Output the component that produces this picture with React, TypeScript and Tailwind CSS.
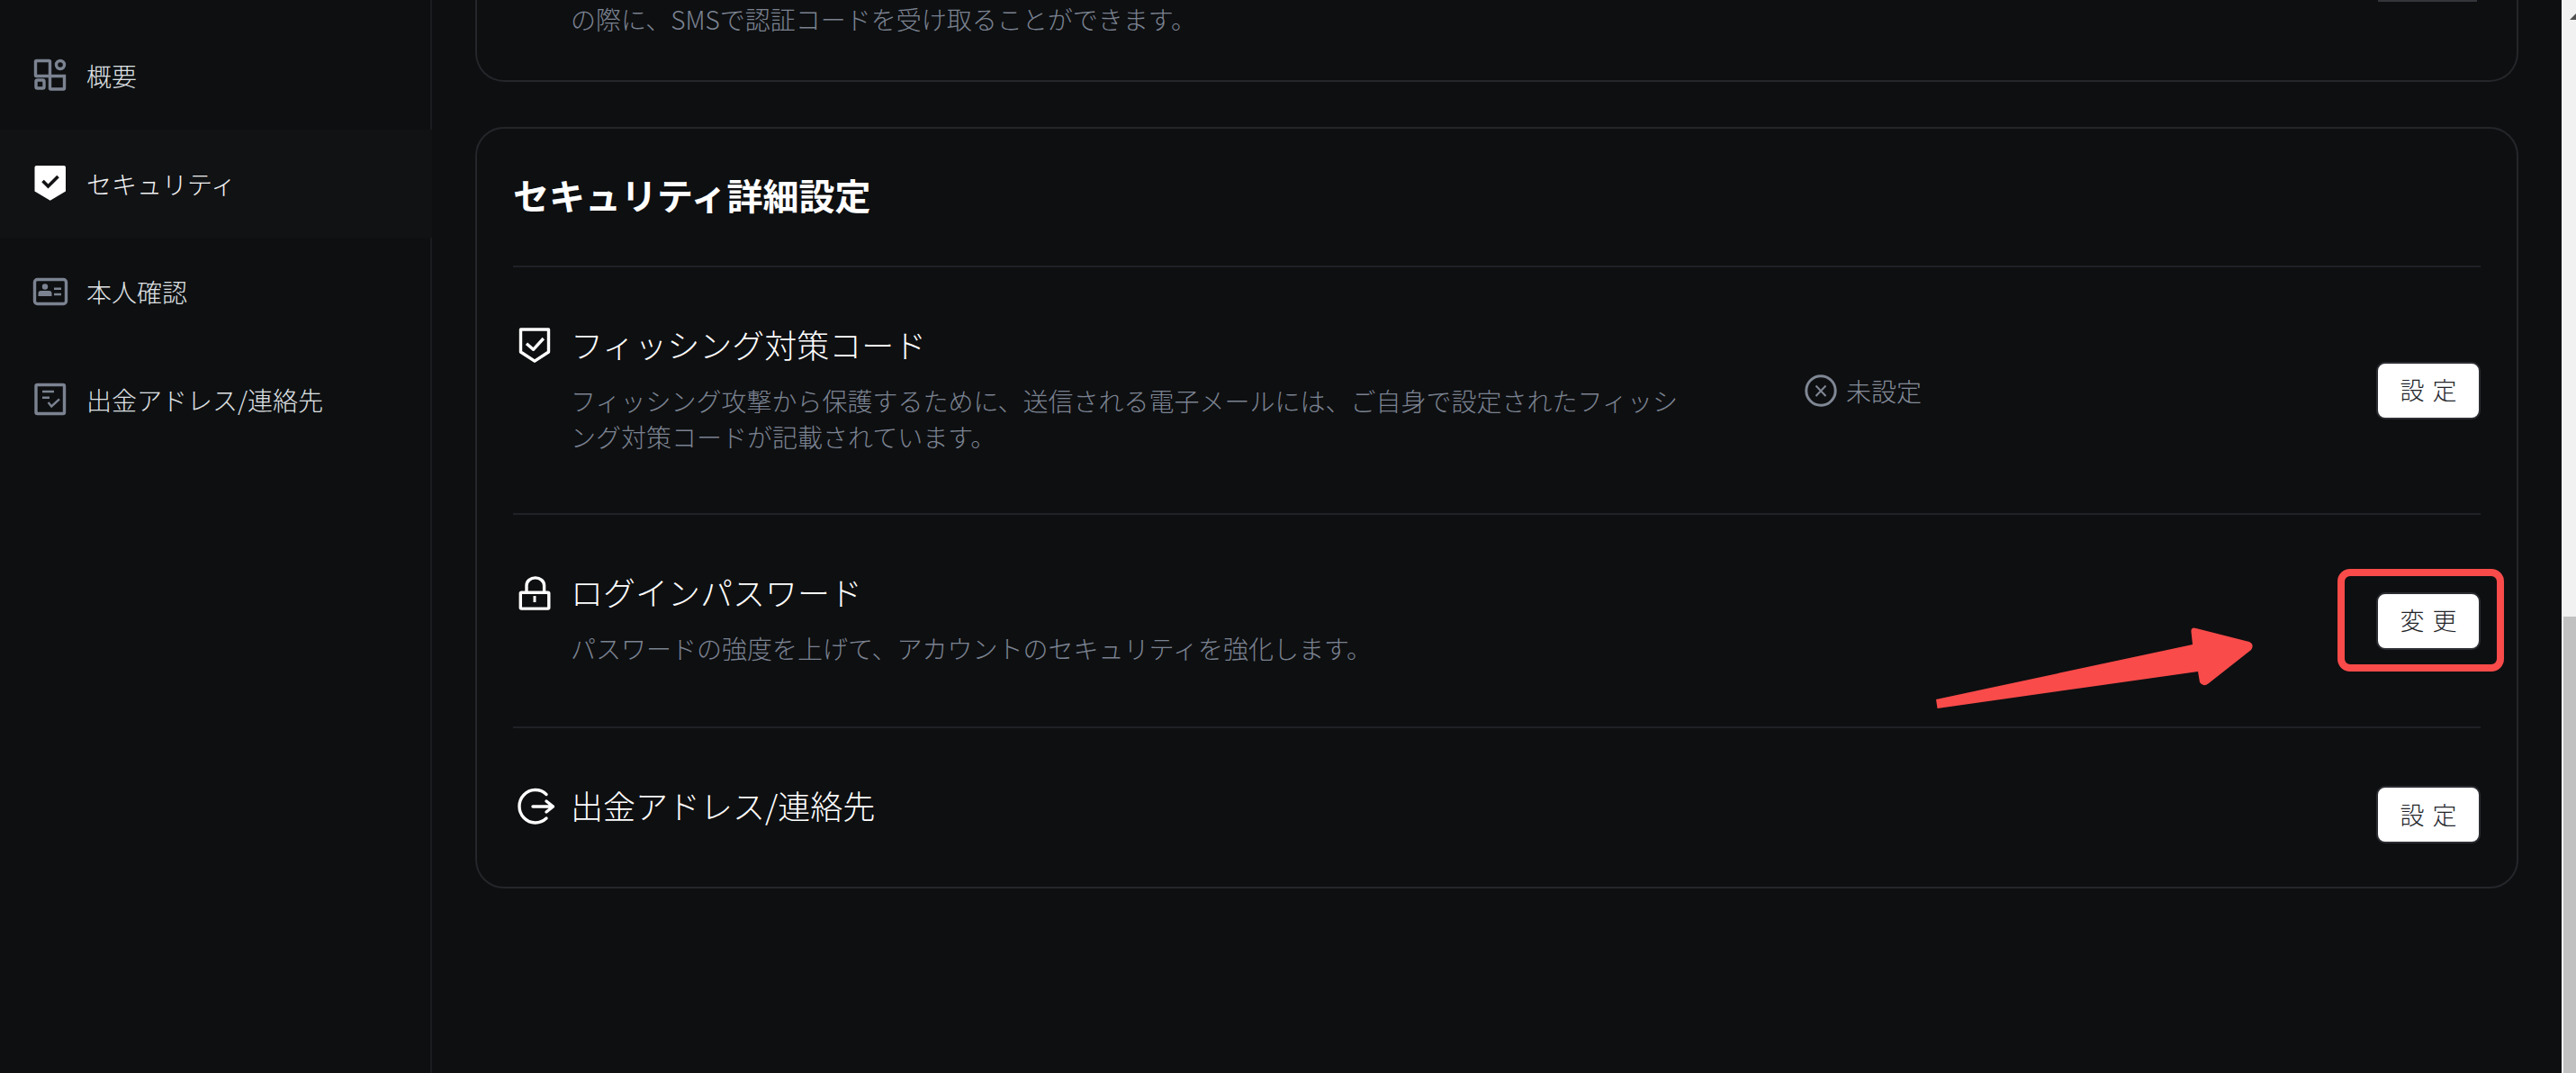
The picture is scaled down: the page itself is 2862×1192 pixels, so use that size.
import React from "react";

const stroke = "#7b8391";

function OverviewIcon() {
  return (
    <svg width="40" height="40" viewBox="0 0 40 40" fill="none" stroke={stroke} strokeWidth="3.4" className="shrink-0">
      <path d="M4.5 3.5H18.5A1 1 0 0 1 19.5 4.5V20.5H4.5A1 1 0 0 1 3.5 19.5V4.5A1 1 0 0 1 4.5 3.5Z" />
      <circle cx="31" cy="8" r="4.5" />
      <rect x="4" y="25" width="9" height="9" rx="1.5" />
      <path d="M19.5 20.5H35.5V34A1 1 0 0 1 34.5 35H20.5A1 1 0 0 1 19.5 34Z" />
    </svg>
  );
}

function ShieldFilledIcon() {
  return (
    <svg width="40" height="40" viewBox="0 0 40 40" fill="none" className="shrink-0">
      <path d="M4.5 0H35A2 2 0 0 1 37 2V28.5L19.75 38.7L2.5 28.5V2A2 2 0 0 1 4.5 0Z" fill="#ffffff" />
      <path d="M11.5 17L17.5 23L28.5 12" stroke="#111214" strokeWidth="3.6" />
    </svg>
  );
}

function IdCardIcon() {
  return (
    <svg width="40" height="40" viewBox="0 0 40 40" fill="none" className="shrink-0">
      <rect x="2.5" y="6.5" width="35" height="27" rx="3" stroke={stroke} strokeWidth="3.4" />
      <circle cx="14" cy="14.5" r="3.2" fill={stroke} />
      <path d="M6.5 25V22A3 3 0 0 1 9.5 19H18.5A3 3 0 0 1 21.5 22V25Z" fill={stroke} />
      <path d="M24 16.7H32M24 23H32" stroke={stroke} strokeWidth="2.6" />
    </svg>
  );
}

function DocCheckIcon() {
  return (
    <svg width="40" height="40" viewBox="0 0 40 40" fill="none" className="shrink-0">
      <rect x="4" y="3.5" width="31.5" height="32" rx="1.5" stroke={stroke} strokeWidth="3.4" />
      <path d="M11 11H24M11 17.7H19" stroke={stroke} strokeWidth="2.4" />
      <path d="M17.6 23L21.2 27.4L30 19.3" stroke={stroke} strokeWidth="2.4" />
    </svg>
  );
}

function RowShield() {
  return (
    <svg width="48" height="48" viewBox="0 0 48 48" fill="none" stroke="#ffffff" strokeWidth="3.4" strokeLinejoin="round" className="mt-[5px] mr-[16px] shrink-0">
      <path d="M8.5 6H39.5V31L24 41.2L8.5 31Z" />
      <path d="M15 21.7L22.5 28.3L33.8 16" />
    </svg>
  );
}

function RowLock() {
  return (
    <svg width="48" height="48" viewBox="0 0 48 48" fill="none" stroke="#ffffff" strokeWidth="3.4" strokeLinejoin="round" className="mt-[5px] mr-[16px] shrink-0">
      <rect x="8.3" y="23.3" width="31.5" height="17.8" rx="1" />
      <path d="M15 23V15.5A9.5 8.4 0 0 1 34.6 15.5V23" />
      <path d="M24 27V34" strokeWidth="3" />
    </svg>
  );
}

function RowExit() {
  return (
    <svg width="48" height="48" viewBox="0 0 48 48" fill="none" stroke="#ffffff" strokeWidth="3.4" strokeLinecap="round" strokeLinejoin="round" className="mt-[5px] mr-[16px] shrink-0">
      <path d="M37 10.5A17.8 18.2 0 1 0 37 37" />
      <path d="M22 24H44.5M37 18L44.5 24L37 30" />
    </svg>
  );
}

function XCircle() {
  return (
    <svg width="36" height="36" viewBox="0 0 36 36" fill="none" stroke="#7f8794" className="shrink-0">
      <circle cx="18" cy="18" r="16.2" strokeWidth="3" />
      <path d="M12.5 12.5L23.5 24M23.5 12.5L12.5 24" strokeWidth="2" />
    </svg>
  );
}

function ActionButton({ label, extra = "" }: { label: string; extra?: string }) {
  return (
    <button
      className={`flex h-[64px] w-[116px] shrink-0 items-center justify-center rounded-[10px] border-2 border-[#2c2d32] bg-white text-[27px] font-light text-[#222428] ${extra}`}
    >
      <span className="mr-[-9px] tracking-[9px]">{label}</span>
    </button>
  );
}

function NavItem({ icon, label, active }: { icon: React.ReactNode; label: string; active?: boolean }) {
  return (
    <div
      className={`mr-[-2px] flex h-[120px] items-center gap-[20px] pl-[36px] text-[28px] font-light ${
        active ? "relative bg-[#111214] text-[#f1f2f3]" : "text-[#dfe1e4]"
      }`}
    >
      {icon}
      <span>{label}</span>
    </div>
  );
}

export default function App() {
  return (
    <div className="relative flex h-[1192px] w-[2862px] overflow-hidden bg-[#0e0f11] font-['Noto_Sans_CJK_JP','Noto_Sans',sans-serif]">
      <aside className="w-[480px] shrink-0 border-r-2 border-[#1b1c20] pt-[24px]">
        <NavItem icon={<OverviewIcon />} label="概要" />
        <NavItem icon={<ShieldFilledIcon />} label="セキュリティ" active />
        <NavItem icon={<IdCardIcon />} label="本人確認" />
        <NavItem icon={<DocCheckIcon />} label="出金アドレス/連絡先" />
      </aside>

      <main className="flex min-w-0 flex-1 flex-col pl-[48px] pr-[48px]">
        <section className="flex h-[91px] justify-between rounded-b-[32px] border-x-2 border-b-2 border-[#25262a] pl-[104px] pr-[44px]">
          <p className="mt-[1px] text-[28px] font-light leading-[40px] text-[#7b8391]">
            の際に、SMSで認証コードを受け取ることができます。
          </p>
          <div className="h-[2px] w-[110px] bg-[#33353a]" />
        </section>

        <section className="mt-[50px] rounded-[32px] border-2 border-[#25262a] px-[40px]">
          <h2 className="pb-[49px] pt-[43px] text-[40px] font-bold leading-[60px] text-white">セキュリティ詳細設定</h2>

          <div className="flex items-center border-t-2 border-[#202127] pb-[65px] pt-[58px]">
            <div className="flex w-[1435px] shrink-0 self-start">
              <RowShield />
              <div className="w-[1240px]">
                <h3 className="text-[36px] font-light leading-[54px] text-white">フィッシング対策コード</h3>
                <p className="mt-[16px] text-[28px] font-light leading-[40px] text-[#7b8391]">
                  フィッシング攻撃から保護するために、送信される電子メールには、ご自身で設定されたフィッシング対策コードが記載されています。
                </p>
              </div>
            </div>
            <div className="mt-[7px] flex items-center gap-[10px] text-[28px] font-light text-[#848c99]">
              <XCircle />
              <span>未設定</span>
            </div>
            <ActionButton label="設定" extra="ml-auto mt-[7px]" />
          </div>

          <div className="flex items-center border-t-2 border-[#202127] pb-[67px] pt-[58px]">
            <div className="flex self-start">
              <RowLock />
              <div>
                <h3 className="text-[36px] font-light leading-[54px] text-white">ログインパスワード</h3>
                <p className="mt-[16px] text-[28px] font-light leading-[40px] text-[#7b8391]">
                  パスワードの強度を上げて、アカウントのセキュリティを強化します。
                </p>
              </div>
            </div>
            <ActionButton label="変更" extra="ml-auto mt-[9px]" />
          </div>

          <div className="flex items-start border-t-2 border-[#202127] pb-[48px] pt-[58px]">
            <RowExit />
            <h3 className="text-[36px] font-light leading-[54px] text-white">出金アドレス/連絡先</h3>
            <ActionButton label="設定" extra="ml-auto mt-[6px]" />
          </div>
        </section>
      </main>

      <div className="relative w-[16px] shrink-0 bg-[#f1f1f1]">
        <div className="absolute bottom-0 left-[2px] right-0 top-[685px] bg-[#c1c1c1]" />
        <svg width="8" height="8" viewBox="0 0 8 8" className="absolute left-[9px] top-[15px]">
          <path d="M7 0V7H0Z" fill="#505050" />
        </svg>
      </div>

      {/* annotation overlay */}
      <div className="absolute left-[2597px] top-[632px] h-[114px] w-[185px] rounded-[14px] border-[8px] border-[#f84b4a]" />
      <svg width="380" height="120" viewBox="0 0 380 120" className="absolute left-[2140px] top-[680px]">
        <path
          d="M11 97L296 36L294.5 22Q294 16 300 18L359 33Q365 36 361 42L314 79Q308 84 304 78L302 66L12.5 107Z"
          fill="#f84b4a"
        />
      </svg>
    </div>
  );
}
